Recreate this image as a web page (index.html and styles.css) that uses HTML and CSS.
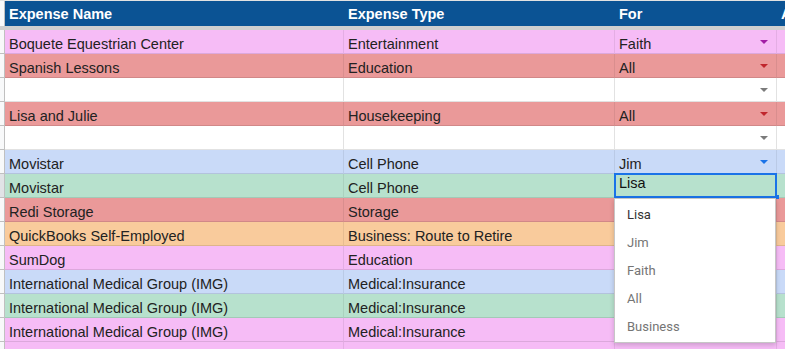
FILE: index.html
```html
<!DOCTYPE html>
<html>
<head>
<meta charset="utf-8">
<link rel="stylesheet" href="styles.css">
</head>
<body>
<div class="sheet">
  <div class="row head">
    <div class="rh"></div>
    <div class="c">Expense Name</div>
    <div class="c">Expense Type</div>
    <div class="c">For</div>
    <div class="c">Amount</div>
  </div>
  <div class="freeze"></div>

  <div class="row pink">
    <div class="rh"></div>
    <div class="c">Boquete Equestrian Center</div>
    <div class="c">Entertainment</div>
    <div class="c dd"><span>Faith</span><i class="arrow purple"></i></div>
    <div class="c"></div>
  </div>
  <div class="row red">
    <div class="rh"></div>
    <div class="c">Spanish Lessons</div>
    <div class="c">Education</div>
    <div class="c dd"><span>All</span><i class="arrow darkred"></i></div>
    <div class="c"></div>
  </div>
  <div class="row white">
    <div class="rh"></div>
    <div class="c"></div>
    <div class="c"></div>
    <div class="c dd"><span></span><i class="arrow gray"></i></div>
    <div class="c"></div>
  </div>
  <div class="row red">
    <div class="rh"></div>
    <div class="c">Lisa and Julie</div>
    <div class="c">Housekeeping</div>
    <div class="c dd"><span>All</span><i class="arrow darkred"></i></div>
    <div class="c"></div>
  </div>
  <div class="row white">
    <div class="rh"></div>
    <div class="c"></div>
    <div class="c"></div>
    <div class="c dd"><span></span><i class="arrow gray"></i></div>
    <div class="c"></div>
  </div>
  <div class="row blue">
    <div class="rh"></div>
    <div class="c">Movistar</div>
    <div class="c">Cell Phone</div>
    <div class="c dd"><span>Jim</span><i class="arrow blueish"></i></div>
    <div class="c"></div>
  </div>
  <div class="row green">
    <div class="rh active"></div>
    <div class="c">Movistar</div>
    <div class="c">Cell Phone</div>
    <div class="c sel">
      <div class="editor">Lisa</div>
      <div class="menu">
        <div class="item current">Lisa</div>
        <div class="item">Jim</div>
        <div class="item">Faith</div>
        <div class="item">All</div>
        <div class="item">Business</div>
      </div>
    </div>
    <div class="c"></div>
  </div>
  <div class="row red">
    <div class="rh"></div>
    <div class="c">Redi Storage</div>
    <div class="c">Storage</div>
    <div class="c"></div>
    <div class="c"></div>
  </div>
  <div class="row orange">
    <div class="rh"></div>
    <div class="c">QuickBooks Self-Employed</div>
    <div class="c">Business: Route to Retire</div>
    <div class="c"></div>
    <div class="c"></div>
  </div>
  <div class="row pink">
    <div class="rh"></div>
    <div class="c">SumDog</div>
    <div class="c">Education</div>
    <div class="c"></div>
    <div class="c"></div>
  </div>
  <div class="row blue">
    <div class="rh"></div>
    <div class="c">International Medical Group (IMG)</div>
    <div class="c">Medical:Insurance</div>
    <div class="c"></div>
    <div class="c"></div>
  </div>
  <div class="row green">
    <div class="rh"></div>
    <div class="c">International Medical Group (IMG)</div>
    <div class="c">Medical:Insurance</div>
    <div class="c"></div>
    <div class="c"></div>
  </div>
  <div class="row pink">
    <div class="rh"></div>
    <div class="c">International Medical Group (IMG)</div>
    <div class="c">Medical:Insurance</div>
    <div class="c"></div>
    <div class="c"></div>
  </div>
  <div class="row pink">
    <div class="rh"></div>
    <div class="c"></div>
    <div class="c"></div>
    <div class="c"></div>
    <div class="c"></div>
  </div>
</div>
</body>
</html>
```

FILE: styles.css
```css
html, body {
  margin: 0;
  padding: 0;
  background: #fff;
  overflow: hidden;
}

.sheet {
  width: 785px;
  font-family: "Liberation Sans", Arial, sans-serif;
  font-size: 14.5px;
  color: #222;
}

.row {
  display: grid;
  grid-template-columns: 5px 339px 271px 162px 1fr;
  height: 24px;
}

.rh {
  background: #f8f9fa;
  border-right: 1px solid #c0c0c0;
  border-bottom: 1px solid #c0c0c0;
}

.rh.active {
  background: #e1e3e6;
}

.c {
  box-sizing: border-box;
  display: flex;
  align-items: flex-end;
  padding: 0 0 0 4px;
  line-height: 17px;
  white-space: nowrap;
  overflow: hidden;
  border-right: 1px solid rgba(0, 0, 0, 0.07);
  border-bottom: 1px solid rgba(0, 0, 0, 0.1);
}

.c:last-child {
  border-right: none;
}

/* header */
.row.head {
  height: 26px;
  box-sizing: border-box;
  border-top: 1px solid #e2e2e2;
}

.row.head .rh {
  border-bottom: none;
}

.row.head .c {
  background: #0b5394;
  color: #fff;
  font-weight: bold;
  align-items: center;
  padding-top: 2px;
  padding-bottom: 0;
  border: none;
}

.freeze {
  height: 4px;
  background: #cfcfcf;
}

/* row colours */
.pink { background: #f6bcf6; }
.red { background: #ea9999; }
.white { background: #fff; }
.blue { background: #c9daf8; }
.green { background: #b7e1cd; }
.orange { background: #f9cb9c; }

.white .c {
  border-right-color: #e2e2e2;
  border-bottom-color: #e2e2e2;
}

/* dropdown cells */
.dd {
  justify-content: space-between;
}

.arrow {
  align-self: center;
  width: 0;
  height: 0;
  margin: 1px 8px 0 0;
  border-left: 4px solid transparent;
  border-right: 4px solid transparent;
  border-top: 4px solid #757575;
}

.arrow.purple { border-top-color: #a21ea5; }
.arrow.darkred { border-top-color: #c0262d; }
.arrow.gray { border-top-color: #7b7b7b; }
.arrow.blueish { border-top-color: #1a73e8; }

/* selected / editing cell */
.sel {
  position: relative;
  overflow: visible;
}

.editor {
  position: absolute;
  left: -1px;
  top: -1px;
  width: 163px;
  height: 25px;
  box-sizing: border-box;
  border: 2px solid #1a73e8;
  background: #b7e1cd;
  padding-left: 3px;
  line-height: 17px;
  color: #111;
  z-index: 5;
}

.editor::after {
  content: "";
  position: absolute;
  right: -4px;
  bottom: -3px;
  width: 4px;
  height: 4px;
  background: #1a73e8;
}

.menu {
  position: absolute;
  left: -1px;
  top: 24px;
  width: 162px;
  height: 145px;
  box-sizing: border-box;
  padding: 1px 0 2px;
  background: #fff;
  border: 1px solid #c6c6c6;
  box-shadow: 0 2px 5px rgba(0, 0, 0, 0.18);
  font-family: Roboto, "Liberation Sans", Arial, sans-serif;
  font-size: 13px;
  z-index: 10;
}

.item {
  height: 28px;
  display: flex;
  align-items: center;
  padding-left: 12px;
  color: #757575;
}

.item.current {
  color: #333;
}
```
